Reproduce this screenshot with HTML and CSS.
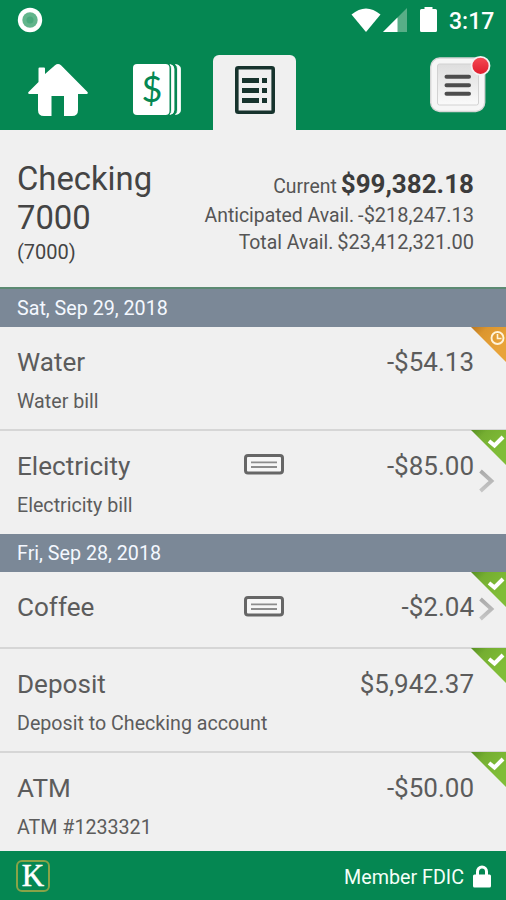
FILE: index.html
```html
<!DOCTYPE html>
<html lang="en">
<head>
<meta charset="utf-8">
<title>Checking 7000</title>
<link rel="stylesheet" href="styles.css">
</head>
<body>
<svg class="defs" aria-hidden="true">
  <defs>
    <linearGradient id="green" x1="0" y1="0" x2="0.7" y2="0.7"><stop offset="0" stop-color="#568f22"/><stop offset="0.35" stop-color="#75ae31"/><stop offset="1" stop-color="#80bd38"/></linearGradient>
    <linearGradient id="orange" x1="0" y1="0" x2="0.7" y2="0.7"><stop offset="0" stop-color="#b87620"/><stop offset="0.35" stop-color="#dc962f"/><stop offset="1" stop-color="#e8a339"/></linearGradient>
    <linearGradient id="arrow" x1="0" y1="0" x2="0" y2="1"><stop offset="0" stop-color="#aaa"/><stop offset="1" stop-color="#c6c6c6"/></linearGradient>
    <linearGradient id="button" x1="0" y1="0" x2="0" y2="1"><stop offset="0" stop-color="#dedede"/><stop offset="1" stop-color="#fafafa"/></linearGradient>
    <linearGradient id="red" x1="0" y1="0" x2="0" y2="1"><stop offset="0" stop-color="#f64b55"/><stop offset="1" stop-color="#df1c2c"/></linearGradient>
    <symbol id="done" viewBox="0 0 35 36"><path d="M0 0H35V35Z" fill="url(#green)"/><path d="M18 11l5.500 4.500L32 7" fill="none" stroke="#fff" stroke-width="4"/></symbol>
    <symbol id="pending" viewBox="0 0 35 36"><path d="M0 0H35V35Z" fill="url(#orange)"/><circle cx="26.500" cy="11" r="6" fill="none" stroke="#fff3d8" stroke-width="1.900"/><path d="M26.500 7v4.500h4" fill="none" stroke="#fff3d8" stroke-width="1.600"/></symbol>
    <symbol id="check" viewBox="0 0 40 21"><rect x="1.500" y="1.500" width="37" height="17.500" rx="2.500" fill="#f6f6f6" stroke="#666" stroke-width="3"/><path d="M7 8.300h26M7 13h26" stroke="#8c8c8c" stroke-width="1.800"/></symbol>
    <symbol id="chevron" viewBox="0 0 16 24"><path d="M1.500 2L12.500 12L1.500 22" fill="none" stroke="url(#arrow)" stroke-width="3.800"/></symbol>
  </defs>
</svg>
<div class="app">
  <header class="header">
    <div class="status">
      <svg class="record" viewBox="0 0 26 26"><circle cx="13" cy="13" r="12.200" fill="#fff"/><circle cx="13" cy="13" r="7.700" fill="#62b58c"/><circle cx="13" cy="13" r="3.500" fill="#4aa97c"/></svg>
      <div class="signals">
        <svg class="wifi" viewBox="0 0 30 25"><path d="M.5 6.500Q15-5.500 29.500 6.500L15 24Z" fill="#fff"/></svg>
        <svg class="cell" viewBox="0 0 24 24"><path d="M24 0V24H0Z" fill="#58ae87"/><path d="M14.500 9.500V24H0Z" fill="#fff"/></svg>
        <svg class="battery" viewBox="0 0 17 25"><path d="M4.500 0H12.500V2H15.500Q17 2 17 3.500V23.500Q17 25 15.500 25H1.500Q0 25 0 23.500V3.500Q0 2 1.500 2H4.500Z" fill="#fff"/></svg>
        <span class="time">3:17</span>
      </div>
    </div>
    <nav class="tabs">
      <a class="tab home"><svg viewBox="0 0 60 53"><path d="M10.500 4.500Q10.500 3.500 11.500 3.500H16Q17 3.500 17 4.500V10L27 1.200Q30 -1 33 1.200L59.500 28Q60.500 30 58.500 30H50V46Q50 52 44 52H36V32H23.500V52H16Q10 52 10 46V30H1.500Q-.5 30 .5 28L10.500 18Z" fill="#fff"/></svg></a>
      <a class="tab bills"><svg viewBox="0 0 48 52"><rect width="36.500" height="51" rx="4" fill="#fff"/><path d="M37 .5Q41 1 41 5V46Q41 50 37 50.500Q38.500 49 38.500 46V5Q38.500 2 37 .5ZM42.500 .5Q47.500 1 47.500 5V46Q47.500 50 42.500 50.500Q44.500 49 44.500 46V5Q44.500 2 42.500 .5Z" fill="#fff" stroke="#fff" stroke-width=".8"/><text x="19" y="38" text-anchor="middle" class="dollar">$</text></svg></a>
      <a class="tab register"><svg viewBox="0 0 40 48"><rect x="1.800" y="1.800" width="36.400" height="44.400" rx="1.500" fill="none" stroke="#17332d" stroke-width="3.600"/><path d="M7 14.500H24M7 24.500H24M7 34.500H24M27 14.500H32M27 24.500H32M27 34.500H32" stroke="#17332d" stroke-width="5"/></svg></a>
      <a class="menu"><svg viewBox="0 0 62 58"><rect x=".7" y="3" width="54" height="53.500" rx="9" fill="#f6f6f6" stroke="#d6d6d6" stroke-width="1.400"/><rect x="7.500" y="9" width="41" height="41" rx="2" fill="url(#button)" stroke="#d2d2d2"/><path d="M16.500 21.800H39M16.500 30.300H39M16.500 38.800H39" stroke="#4d4d4d" stroke-width="4" stroke-linecap="round"/><circle cx="50.500" cy="10.800" r="9" fill="url(#red)" stroke="#f3f3f3" stroke-width="1.800"/></svg></a>
    </nav>
  </header>
  <section class="account">
    <div class="identity"><h1>Checking<br>7000</h1><p>(7000)</p></div>
    <div class="balances">
      <p class="current"><span>Current</span> <b>$99,382.18</b></p>
      <p><span>Anticipated Avail.</span> -$218,247.13</p>
      <p><span>Total Avail.</span> $23,412,321.00</p>
    </div>
  </section>
  <h2 class="date first">Sat, Sep 29, 2018</h2>
  <article class="row"><h3>Water</h3><span class="amount">-$54.13</span><p>Water bill</p><svg class="corner"><use href="#pending"/></svg></article>
  <article class="row bordered before-date"><h3>Electricity</h3><svg class="slip"><use href="#check"/></svg><span class="amount">-$85.00</span><p>Electricity bill</p><svg class="corner"><use href="#done"/></svg><svg class="chevron"><use href="#chevron"/></svg></article>
  <h2 class="date">Fri, Sep 28, 2018</h2>
  <article class="row short"><h3>Coffee</h3><svg class="slip"><use href="#check"/></svg><span class="amount">-$2.04</span><svg class="corner"><use href="#done"/></svg><svg class="chevron"><use href="#chevron"/></svg></article>
  <article class="row bordered"><h3>Deposit</h3><span class="amount">$5,942.37</span><p>Deposit to Checking account</p><svg class="corner"><use href="#done"/></svg></article>
  <article class="row bordered last"><h3>ATM</h3><span class="amount">-$50.00</span><p>ATM #1233321</p><svg class="corner"><use href="#done"/></svg></article>
  <footer class="footer">
    <div class="logo">K</div>
    <div class="member"><span>Member FDIC</span><svg class="lock" viewBox="0 0 18 23"><path d="M4.500 11V6.500a4.500 4.500 0 0 1 9 0V11" fill="none" stroke="#fff" stroke-width="3"/><rect y="9.500" width="18" height="13" rx="1.500" fill="#fff"/></svg></div>
  </footer>
</div>
</body>
</html>
```
FILE: styles.css
```css
* { box-sizing: border-box; }
body { margin: 0; font-family: Roboto, "Liberation Sans", sans-serif; background: #f0f0f0; }
h1, h2, h3, p { margin: 0; font-weight: 400; }
svg { display: block; flex: none; }
.defs { position: absolute; width: 0; height: 0; }
.app { width: 506px; height: 900px; display: flex; flex-direction: column; overflow: hidden; }
.header { height: 130px; flex: none; background: #058752; display: flex; flex-direction: column; }
.status { height: 40px; padding: 7px 13px 0 17px; display: flex; justify-content: space-between; }
.record { width: 26px; height: 26px; }
.signals { display: flex; }
.wifi { width: 30px; height: 25px; margin: 1px 2px 0 0; }
.cell { width: 24px; height: 24px; margin: 1px 13px 0 0; }
.battery { width: 17px; height: 25px; margin-right: 12px; }
.time { width: 44px; color: #fff; font-size: 23px; line-height: 30px; font-weight: 500; white-space: nowrap; }
.tabs { flex: 1; display: flex; }
.home { margin: 24px 0 0 28px; width: 60px; }
.home svg { width: 60px; height: 53px; }
.bills { margin: 24px 0 0 45px; width: 48px; }
.bills svg { width: 48px; height: 52px; }
.dollar { font: 36px Lato, sans-serif; fill: #058752; }
.register { margin: 15px 0 0 32px; width: 83px; height: 75px; padding: 11px 0 0 22px; border-radius: 6px 6px 0 0; background: #f0f0f0; }
.register svg { width: 40px; height: 48px; }
.menu { margin: 15px 0 0 134px; }
.menu svg { width: 62px; height: 58px; }
.account { height: 157px; flex: none; display: flex; justify-content: space-between; padding: 29px 32px 0 17px; color: #444; }
.identity { padding-top: 1px; }
.identity h1 { font-size: 32.800px; line-height: 38.500px; }
.identity p { font-size: 20px; line-height: 24px; margin-top: 3px; }
.balances { padding-top: 9px; text-align: right; font-size: 20px; line-height: 27px; white-space: nowrap; color: #555; }
.balances .current { line-height: 32px; margin-bottom: -1px; }
.balances span { font-size: 19.400px; margin-right: -1px; }
.balances b { font-size: 26px; color: #3c3c3c; }
.date { height: 38px; flex: none; padding-left: 17px; background: #7b8897; color: #f4f8ff; font-size: 19.700px; line-height: 40px; }
.first { height: 40px; border-top: 2px solid #5c8a73; line-height: 39px; }
.row { position: relative; height: 102px; flex: none; padding: 18px 32px 0 17px; display: grid; grid-template-columns: 227px 40px 1fr; align-content: start; color: #5c5c5c; }
.row.bordered { border-top: 2px solid #d6d6d6; height: 104px; }
.row.before-date { height: 105px; }
.row.short { height: 75px; }
.row.last { height: 100px; }
.row h3 { grid-column: 1; font-size: 26.100px; line-height: 34px; }
.slip { grid-column: 2; grid-row: 1; width: 40px; height: 21px; margin-top: 6px; }
.bordered .slip { margin-top: 5px; }
.amount { grid-column: 3; grid-row: 1; text-align: right; font-size: 26px; line-height: 34px; }
.row p { grid-column: 1 / 4; font-size: 19.650px; line-height: 24px; margin-top: 11px; }
.corner { position: absolute; top: 0; right: 0; width: 35px; height: 36px; }
.bordered .corner { top: -1px; }
.chevron { position: absolute; right: 11px; top: 38px; width: 16px; height: 24px; }
.short .chevron { top: 25px; }
.footer { flex: none; height: 49px; background: #058752; padding: 9px 15px 0 16px; display: flex; justify-content: space-between; }
.logo { width: 34px; height: 32px; border: 2px solid #88a347; border-radius: 6px; color: #fff; text-align: center; font: 31px/28px "Liberation Serif", serif; -webkit-text-stroke: .5px #fff; }
.member { display: flex; gap: 9px; color: #f4fff8; font-size: 19.700px; line-height: 36px; }
.lock { width: 18px; height: 23px; margin-top: 5px; }
```
